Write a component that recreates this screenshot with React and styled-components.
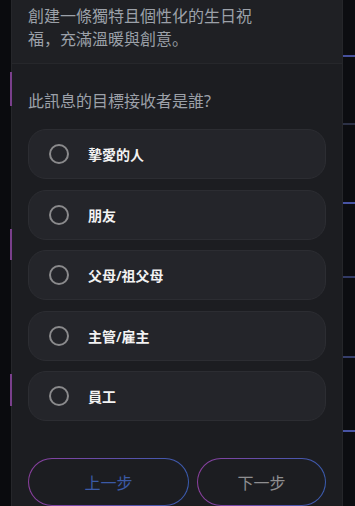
import React from 'react';
import styled, { createGlobalStyle } from 'styled-components';

const GlobalStyle = createGlobalStyle`
  * { box-sizing: border-box; }
  html, body { margin: 0; padding: 0; background: #0b0c10; }
  body {
    font-family: "Noto Sans", "Noto Sans CJK SC", sans-serif;
    overflow: hidden;
  }
`;

const options = ['摯愛的人', '朋友', '父母/祖父母', '主管/雇主', '員工'];

const leftMarks = [
  { top: 72, height: 34 },
  { top: 229, height: 31 },
  { top: 374, height: 32 },
];

const rightMarks = [
  { top: 55, color: '#46509c' },
  { top: 123, color: '#2c3146' },
  { top: 202, color: '#4753a3' },
  { top: 276, color: '#323a66' },
  { top: 356, color: '#363e6c' },
  { top: 430, color: '#4753a3' },
];

const App = () => {
  return (
    <>
      <GlobalStyle />
      <Page>
        <Gutter $side="left">
          {leftMarks.map((m, i) => (
            <PurpleMark key={i} style={{ top: m.top, height: m.height }} />
          ))}
        </Gutter>
        <Panel>
          <Intro>
            <IntroText>創建一條獨特且個性化的生日祝福，充滿溫暖與創意。</IntroText>
          </Intro>
          <Body>
            <Question>此訊息的目標接收者是誰?</Question>
            <OptionList>
              {options.map((label) => (
                <Option key={label}>
                  <Radio />
                  <OptionLabel>{label}</OptionLabel>
                </Option>
              ))}
            </OptionList>
            <Actions>
              <NavButton $muted>上一步</NavButton>
              <NavButton>下一步</NavButton>
            </Actions>
          </Body>
        </Panel>
        <Gutter $side="right">
          {rightMarks.map((m, i) => (
            <BlueMark key={i} style={{ top: m.top, background: m.color }} />
          ))}
        </Gutter>
      </Page>
    </>
  );
};

const Page = styled.div`
  display: flex;
  width: 355px;
  height: 506px;
  overflow: hidden;
  background: #0b0c10;
`;

const Gutter = styled.div`
  position: relative;
  flex: 0 0 ${({ $side }) => ($side === 'left' ? '11px' : '12px')};
  background: ${({ $side }) => ($side === 'left' ? '#0a0b0e' : '#0c0d11')};
`;

const PurpleMark = styled.span`
  position: absolute;
  right: -1px;
  width: 2px;
  background: #7a3f8c;
`;

const BlueMark = styled.span`
  position: absolute;
  left: 0;
  right: 0;
  height: 2px;
`;

const Panel = styled.div`
  flex: 1;
  display: flex;
  flex-direction: column;
  background: #1c1d21;
  border-left: 1px solid #25262a;
  border-right: 1px solid #25262a;
`;

const Intro = styled.div`
  height: 65px;
  padding: 5px 16px 0 16px;
  background: #1f2024;
  border-bottom: 1px solid #26272b;
`;

const IntroText = styled.p`
  margin: 0;
  width: 236px;
  font-size: 16px;
  line-height: 23px;
  color: #9ca1a9;
`;

const Body = styled.div`
  display: flex;
  flex-direction: column;
  padding: 25px 16px 0 16px;
`;

const Question = styled.p`
  margin: 0 0 16px 0;
  font-size: 16px;
  line-height: 24px;
  color: #9ca1a9;
`;

const OptionList = styled.div`
  display: flex;
  flex-direction: column;
  gap: 10.5px;
`;

const Option = styled.div`
  display: flex;
  align-items: center;
  gap: 19px;
  height: 50px;
  padding: 0 20px;
  background: #24252a;
  border: 1px solid #2c2d32;
  border-radius: 18px;
`;

const Radio = styled.span`
  flex: 0 0 20px;
  width: 20px;
  height: 20px;
  border-radius: 50%;
  border: 2px solid #8a8a8c;
`;

const OptionLabel = styled.span`
  font-size: 14px;
  font-weight: 600;
  color: #f2f2f2;
`;

const Actions = styled.div`
  display: grid;
  grid-template-columns: 161px 129px;
  gap: 8px;
  margin-top: 37px;
`;

const NavButton = styled.button`
  height: 48px;
  border-radius: 24px;
  border: 1.5px solid transparent;
  background:
    linear-gradient(#1c1d21, #1c1d21) padding-box,
    linear-gradient(90deg, #8c3f9f, #3a5cb0) border-box;
  font-family: inherit;
  font-size: 16px;
  color: ${({ $muted }) => ($muted ? '#3b5aa6' : '#8e8e90')};
  cursor: pointer;
`;

export default App;
